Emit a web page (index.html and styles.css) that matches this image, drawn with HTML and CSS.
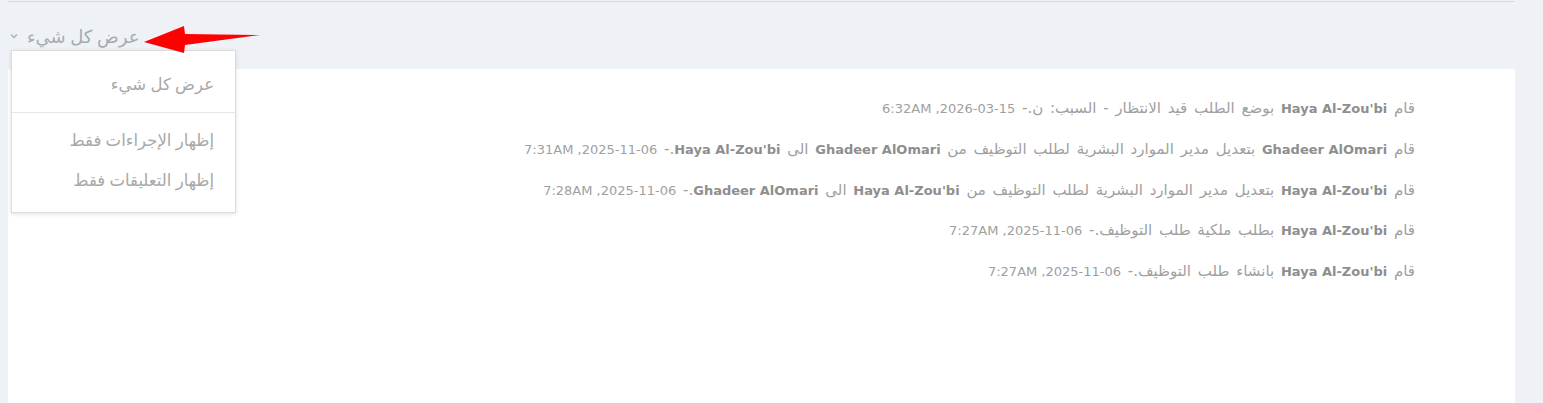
FILE: index.html
```
<!DOCTYPE html>
<html lang="ar">
<head>
  <meta charset="UTF-8" />
  <meta name="viewport" content="width=device-width, initial-scale=1.0"/>
  <title>سجل الطلب</title>
  <link rel="stylesheet" href="styles.css">
</head>
<body>

  <div class="wrap">
    <div class="topline"></div>

    <div class="filter">
      <button class="toggle">
        <svg class="chev" width="8" height="6" viewBox="0 0 8 6"><polyline points="1,1.5 4,4.5 7,1.5" fill="none" stroke="#aab0b8" stroke-width="1.3"/></svg>
        <span dir="rtl">عرض كل شيء</span>
      </button>
    </div>

    <!-- activity log -->
    <div class="panel">
      <p class="entry">قام <b>Haya Al-Zou'bi</b> بوضع الطلب قيد الانتظار - السبب: ن.- <span class="time">2026-03-15, 6:32AM</span></p>
      <p class="entry">قام <b>Ghadeer AlOmari</b> بتعديل مدير الموارد البشرية لطلب التوظيف من <b>Ghadeer AlOmari</b> الى <b>Haya Al-Zou'bi</b>.- <span class="time">2025-11-06, 7:31AM</span></p>
      <p class="entry">قام <b>Haya Al-Zou'bi</b> بتعديل مدير الموارد البشرية لطلب التوظيف من <b>Haya Al-Zou'bi</b> الى <b>Ghadeer AlOmari</b>.- <span class="time">2025-11-06, 7:28AM</span></p>
      <p class="entry">قام <b>Haya Al-Zou'bi</b> بطلب ملكية طلب التوظيف.- <span class="time">2025-11-06, 7:27AM</span></p>
      <p class="entry">قام <b>Haya Al-Zou'bi</b> بانشاء طلب التوظيف.- <span class="time">2025-11-06, 7:27AM</span></p>
    </div>
  </div>

  <!-- open dropdown -->
  <ul class="menu" dir="rtl">
    <li>عرض كل شيء</li>
    <li class="sep"></li>
    <li>إظهار الإجراءات فقط</li>
    <li>إظهار التعليقات فقط</li>
  </ul>

  <svg class="arrow" width="120" height="32" viewBox="0 0 120 32">
    <polygon points="0,17 40,1 41,9 116,10 41,20 40,28" fill="#ff0000"/>
  </svg>

</body>
</html>
```

FILE: styles.css
```
body {
  margin: 0;
  background-color: #eef2f7;
  font-family: "DejaVu Sans", Verdana, sans-serif;
  color: #9a9a9a;
  overflow: hidden;
}
.wrap {
  margin-left: 8px;
  width: 1507px;
}
.topline {
  margin-top: 1px;
  height: 1px;
  background: #d6d9de;
}
.filter {
  height: 67px;
  display: flex;
  align-items: flex-start;
}
.toggle {
  margin-top: 21px;
  display: flex;
  align-items: center;
  gap: 9px;
  padding: 0 0 0 2px;
  border: none;
  background: none;
  font-family: "Noto Sans", "DejaVu Sans", sans-serif;
  font-size: 18px;
  color: #a6abb2;
  line-height: 26px;
}
.panel {
  background: white;
  height: 334px;
  padding: 29px 100px 0 0;
  box-sizing: border-box;
  direction: rtl;
}
.entry {
  margin: 0 0 20.8px;
  font-size: 15px;
  line-height: 20px;
  height: 20px;
  word-spacing: 2px;
  color: #a0a0a0;
}
.entry b {
  font-size: 13px;
  word-spacing: 0;
  color: #8e8e8e;
}
.entry .time {
  font-size: 13px;
  word-spacing: 0;
  unicode-bidi: isolate;
}
.menu {
  position: absolute;
  top: 50px;
  left: 11px;
  width: 223px;
  margin: 0;
  padding: 13px 0 12px;
  list-style: none;
  background: white;
  border: 1px solid #dcdcdc;
  box-shadow: 0 1px 4px rgba(0,0,0,0.12);
  font-family: "Noto Sans", "DejaVu Sans", sans-serif;
  font-size: 16.5px;
  color: #a8a8a8;
}
.menu li {
  height: 40px;
  line-height: 40px;
  padding-right: 21px;
}
.menu li.sep {
  height: 1px;
  margin: 8px 0 7px;
  padding: 0;
  background: #e6e6e6;
}
.arrow {
  position: absolute;
  left: 144px;
  top: 25px;
}
```
